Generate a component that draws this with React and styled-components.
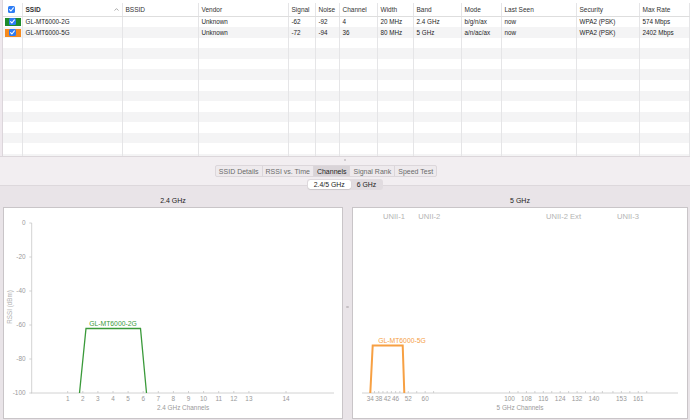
import React from "react";
import styled, { createGlobalStyle } from "styled-components";

const Global = createGlobalStyle`
  html, body { margin: 0; padding: 0; }
  body {
    width: 690px; height: 420px; overflow: hidden;
    background: #f2eef1;
    font-family: "Liberation Sans", Arial, sans-serif;
    -webkit-font-smoothing: antialiased;
  }
`;

const COLS = "20px 100px 76px 90px 27px 24px 38px 36px 48px 40px 75px 63px 1fr";

const Window = styled.div`
  width: 690px; height: 420px;
  display: flex; flex-direction: column;
  background: #f2eef1;
`;

const TableArea = styled.div`
  height: 157px; flex: none;
  box-sizing: border-box;
  padding-left: 2px;
  background: #efe9ee;
  border-bottom: 1px solid #dcd7db;
  overflow: hidden;
`;

const Table = styled.div`
  height: 100%;
  background: #fff;
  border-left: 1px solid #dcd6db;
`;

const HeaderRow = styled.div`
  display: grid; grid-template-columns: ${COLS};
  height: 16.7px; box-sizing: border-box; padding-top: 3px;
  border-bottom: 1px solid #dedede;
  background: #fff;
`;

const Row = styled.div`
  display: grid; grid-template-columns: ${COLS};
  height: 10.55px;
  background: ${p => (p.$odd ? "#f4f4f5" : "#fff")};
`;

const Cell = styled.div`
  display: flex; align-items: center;
  padding-left: 2.5px;
  border-right: 1px solid #e5e5e7;
  font-size: 6.3px; color: #1e1e1e;
  white-space: nowrap; overflow: hidden;
`;

const HeadCell = styled(Cell)`
  color: #333;
  font-size: 6.5px;
  font-weight: ${p => (p.$bold ? 700 : 400)};
  justify-content: ${p => (p.$spread ? "space-between" : "flex-start")};
  padding-right: ${p => (p.$spread ? "3px" : "0")};
`;

const CheckCell = styled.div`
  display: flex; align-items: center;
  justify-content: ${p => (p.$head ? "flex-start" : "center")};
  padding-left: ${p => (p.$head ? "5px" : "0")};
  border-right: 1px solid #e5e5e7;
`;

const ColorBlock = styled.div`
  width: 16px; height: 8px;
  background: ${p => p.$color};
  display: flex; align-items: center; justify-content: center;
`;

const Box = styled.div`
  width: 7px; height: 7px; border-radius: 1.5px;
  background: #2d7cf4;
  display: flex; align-items: center; justify-content: center;
`;

const Check = () => (
  <Box>
    <svg width="7" height="7" viewBox="0 0 7 7">
      <path d="M1.6 3.7 L2.9 5 L5.4 1.9" fill="none" stroke="#fff" strokeWidth="1.1" strokeLinecap="round" strokeLinejoin="round" />
    </svg>
  </Box>
);

const TabArea = styled.div`
  flex: none; height: 28px; box-sizing: border-box;
  padding-top: 1.5px;
  display: flex; flex-direction: column; align-items: center;
`;

const Dot = styled.div`
  width: 2.5px; height: 2.5px; border-radius: 50%;
  background: #c4bfc3;
  margin-bottom: ${p => p.$mb || 0}px;
`;

const Tabs = styled.div`
  display: flex; height: 12px;
  background: #eeeaed;
  border: 0.5px solid #dcd7db; border-radius: 2px;
  box-sizing: border-box;
  margin: 0 38px 2.3px 0;
`;

const Tab = styled.div`
  display: flex; align-items: center;
  padding: 0 3px;
  font-size: 7px;
  color: ${p => (p.$active ? "#1c1c1c" : "#6a6a6a")};
  background: ${p => (p.$active ? "#d9d4d8" : "transparent")};
  border-left: ${p => (p.$first ? "none" : "0.5px solid #dbd6da")};
`;

const SubTabs = styled.div`
  position: relative; z-index: 1;
  display: flex; height: 11px; box-sizing: border-box;
  padding: 1px;
  background: #e1dce0; border-radius: 3px;
  margin-bottom: -5.3px;
`;

const SubTab = styled.div`
  display: flex; align-items: center;
  padding: 0 6px;
  font-size: 6.9px; color: #1c1c1c;
  border-radius: 2.5px;
  background: ${p => (p.$active ? "#fff" : "transparent")};
  box-shadow: ${p => (p.$active ? "0 0.5px 1px rgba(0,0,0,0.18)" : "none")};
`;

const Content = styled.div`
  flex: 1;
  display: flex;
  padding: 0 2px 1px 3px;
  background: #e9e4e8;
  border-top: 1px solid #ddd8dc;
`;

const Column = styled.div`
  display: flex; flex-direction: column;
  width: ${p => (p.$w ? `${p.$w}px` : "auto")};
  flex: ${p => (p.$w ? "none" : 1)};
`;

const Title = styled.div`
  height: 21px; box-sizing: border-box;
  display: flex; align-items: flex-end; justify-content: center;
  padding-bottom: 1px;
  font-size: 7px; line-height: 10px; color: #222;
`;

const Panel = styled.div`
  height: 212px; box-sizing: border-box;
  border: 1px solid #c9c5c8;
  background: #fff;
  overflow: hidden;
`;

const Divider = styled.div`
  width: 9px; flex: none;
  display: flex; align-items: center; justify-content: center;
  padding: 21px 0 12px; box-sizing: border-box;
`;

const columns = ["SSID", "BSSID", "Vendor", "Signal", "Noise", "Channel", "Width", "Band", "Mode", "Last Seen", "Security", "Max Rate"];

const networks = [
  { color: "#1d8b2b", cells: ["GL-MT6000-2G", "", "Unknown", "-62", "-92", "4", "20 MHz", "2.4 GHz", "b/g/n/ax", "now", "WPA2 (PSK)", "574 Mbps"] },
  { color: "#f58a1f", cells: ["GL-MT6000-5G", "", "Unknown", "-72", "-94", "36", "80 MHz", "5 GHz", "a/n/ac/ax", "now", "WPA2 (PSK)", "2402 Mbps"] },
];

const AXIS = "#c6c6c6";
const LABEL = "#9a9a9a";
const FONT = "Liberation Sans, Arial, sans-serif";

const x24 = ch => (ch === 14 ? 286 : 67.7 + (ch - 1) * 15.1);
const yDb = db => 223 + -db * 1.7;

const Chart24 = () => (
  <svg width="338" height="210" viewBox="4 208 338 210" fontFamily={FONT} style={{ display: "block" }}>
    <line x1="31.7" y1="223" x2="31.7" y2="393" stroke={AXIS} strokeWidth="0.8" />
    <line x1="31" y1="393" x2="334" y2="393" stroke={AXIS} strokeWidth="0.8" />
    {[0, -20, -40, -60, -80, -100].map(v => (
      <g key={v}>
        <line x1="29.3" y1={yDb(v)} x2="31.7" y2={yDb(v)} stroke={AXIS} strokeWidth="0.8" />
        <text x="25.5" y={yDb(v) + 2.2} fontSize="6.4" fill={LABEL} textAnchor="end">{v}</text>
      </g>
    ))}
    {[1, 2, 3, 4, 5, 6, 7, 8, 9, 10, 11, 12, 13, 14].map(ch => (
      <g key={ch}>
        <line x1={x24(ch)} y1="391" x2={x24(ch)} y2="393" stroke={AXIS} strokeWidth="0.8" />
        <text x={x24(ch)} y="401.3" fontSize="6.4" fill={LABEL} textAnchor="middle">{ch}</text>
      </g>
    ))}
    <text x="183" y="409.5" fontSize="6.4" fill={LABEL} textAnchor="middle">2.4 GHz Channels</text>
    <text x="0" y="0" fontSize="6.3" fill="#b0b0b0" textAnchor="middle" transform="translate(12.2 307) rotate(-90)">RSSI (dBm)</text>
    <polyline points="79.5,393 86,328.5 140.5,328.5 146.5,393" fill="none" stroke="#3a9a3a" strokeWidth="1.3" strokeLinejoin="miter" />
    <text x="113" y="325.6" fontSize="6.8" fill="#3a9a3a" textAnchor="middle">GL-MT6000-2G</text>
  </svg>
);

const x5 = ch => 370.3 + (ch - 34) * 2.11;
const ticks5 = [34, 36, 38, 40, 42, 44, 46, 48, 52, 56, 60, 64, 100, 104, 108, 112, 116, 120, 124, 128, 132, 136, 140, 144, 149, 153, 157, 161, 165];
const labels5 = [34, 38, 42, 46, 52, 60, 100, 108, 116, 124, 132, 140, 153, 161];
const bands = [["UNII-1", 394], ["UNII-2", 429.3], ["UNII-2 Ext", 563.5], ["UNII-3", 628]];

const Chart5 = () => (
  <svg width="334" height="210" viewBox="353 208 334 210" fontFamily={FONT} style={{ display: "block" }}>
    {bands.map(([t, x]) => (
      <text key={t} x={x} y="218.8" fontSize="7.6" fill="#b3b3b3" textAnchor="middle">{t}</text>
    ))}
    <line x1="362" y1="393" x2="678" y2="393" stroke={AXIS} strokeWidth="0.8" />
    {ticks5.map(ch => (
      <line key={ch} x1={x5(ch)} y1="391" x2={x5(ch)} y2="393" stroke={AXIS} strokeWidth="0.8" />
    ))}
    {labels5.map(ch => (
      <text key={ch} x={x5(ch)} y="401.3" fontSize="6.4" fill={LABEL} textAnchor="middle">{ch}</text>
    ))}
    <text x="520" y="410" fontSize="6.4" fill={LABEL} textAnchor="middle">5 GHz Channels</text>
    <polyline points="370.3,393 372.7,345.5 402.7,345.5 404.3,393" fill="none" stroke="#f7a043" strokeWidth="2" strokeLinejoin="miter" />
    <text x="402" y="342.6" fontSize="6.8" fill="#f5a045" textAnchor="middle">GL-MT6000-5G</text>
  </svg>
);

const SortArrow = () => (
  <svg width="5" height="3" viewBox="0 0 5 3">
    <path d="M0.5 2.6 L2.5 0.6 L4.5 2.6" fill="none" stroke="#888" strokeWidth="0.7" />
  </svg>
);

export default function App() {
  const emptyRows = Array.from({ length: 12 }, (_, i) => i + 2);
  return (
    <Window>
      <Global />
      <TableArea>
        <Table>
          <HeaderRow>
            <CheckCell $head><Check /></CheckCell>
            {columns.map((c, i) => (
              <HeadCell key={c} $bold={i === 0} $spread={i === 0}>
                {c}
                {i === 0 && <SortArrow />}
              </HeadCell>
            ))}
          </HeaderRow>
          {networks.map((n, r) => (
            <Row key={n.cells[0]} $odd={r % 2 === 1}>
              <CheckCell><ColorBlock $color={n.color}><Check /></ColorBlock></CheckCell>
              {n.cells.map((v, i) => <Cell key={i}>{v}</Cell>)}
            </Row>
          ))}
          {emptyRows.map(r => (
            <Row key={r} $odd={r % 2 === 1}>
              <CheckCell />
              {columns.map(c => <Cell key={c} />)}
            </Row>
          ))}
        </Table>
      </TableArea>
      <TabArea>
        <Dot $mb={4} />
        <Tabs>
          {["SSID Details", "RSSI vs. Time", "Channels", "Signal Rank", "Speed Test"].map((t, i) => (
            <Tab key={t} $first={i === 0} $active={t === "Channels"}>{t}</Tab>
          ))}
        </Tabs>
        <SubTabs>
          <SubTab $active>2.4/5 GHz</SubTab>
          <SubTab>6 GHz</SubTab>
        </SubTabs>
      </TabArea>
      <Content>
        <Column $w={340}>
          <Title>2.4 GHz</Title>
          <Panel><Chart24 /></Panel>
        </Column>
        <Divider><Dot /></Divider>
        <Column>
          <Title>5 GHz</Title>
          <Panel><Chart5 /></Panel>
        </Column>
      </Content>
    </Window>
  );
}
